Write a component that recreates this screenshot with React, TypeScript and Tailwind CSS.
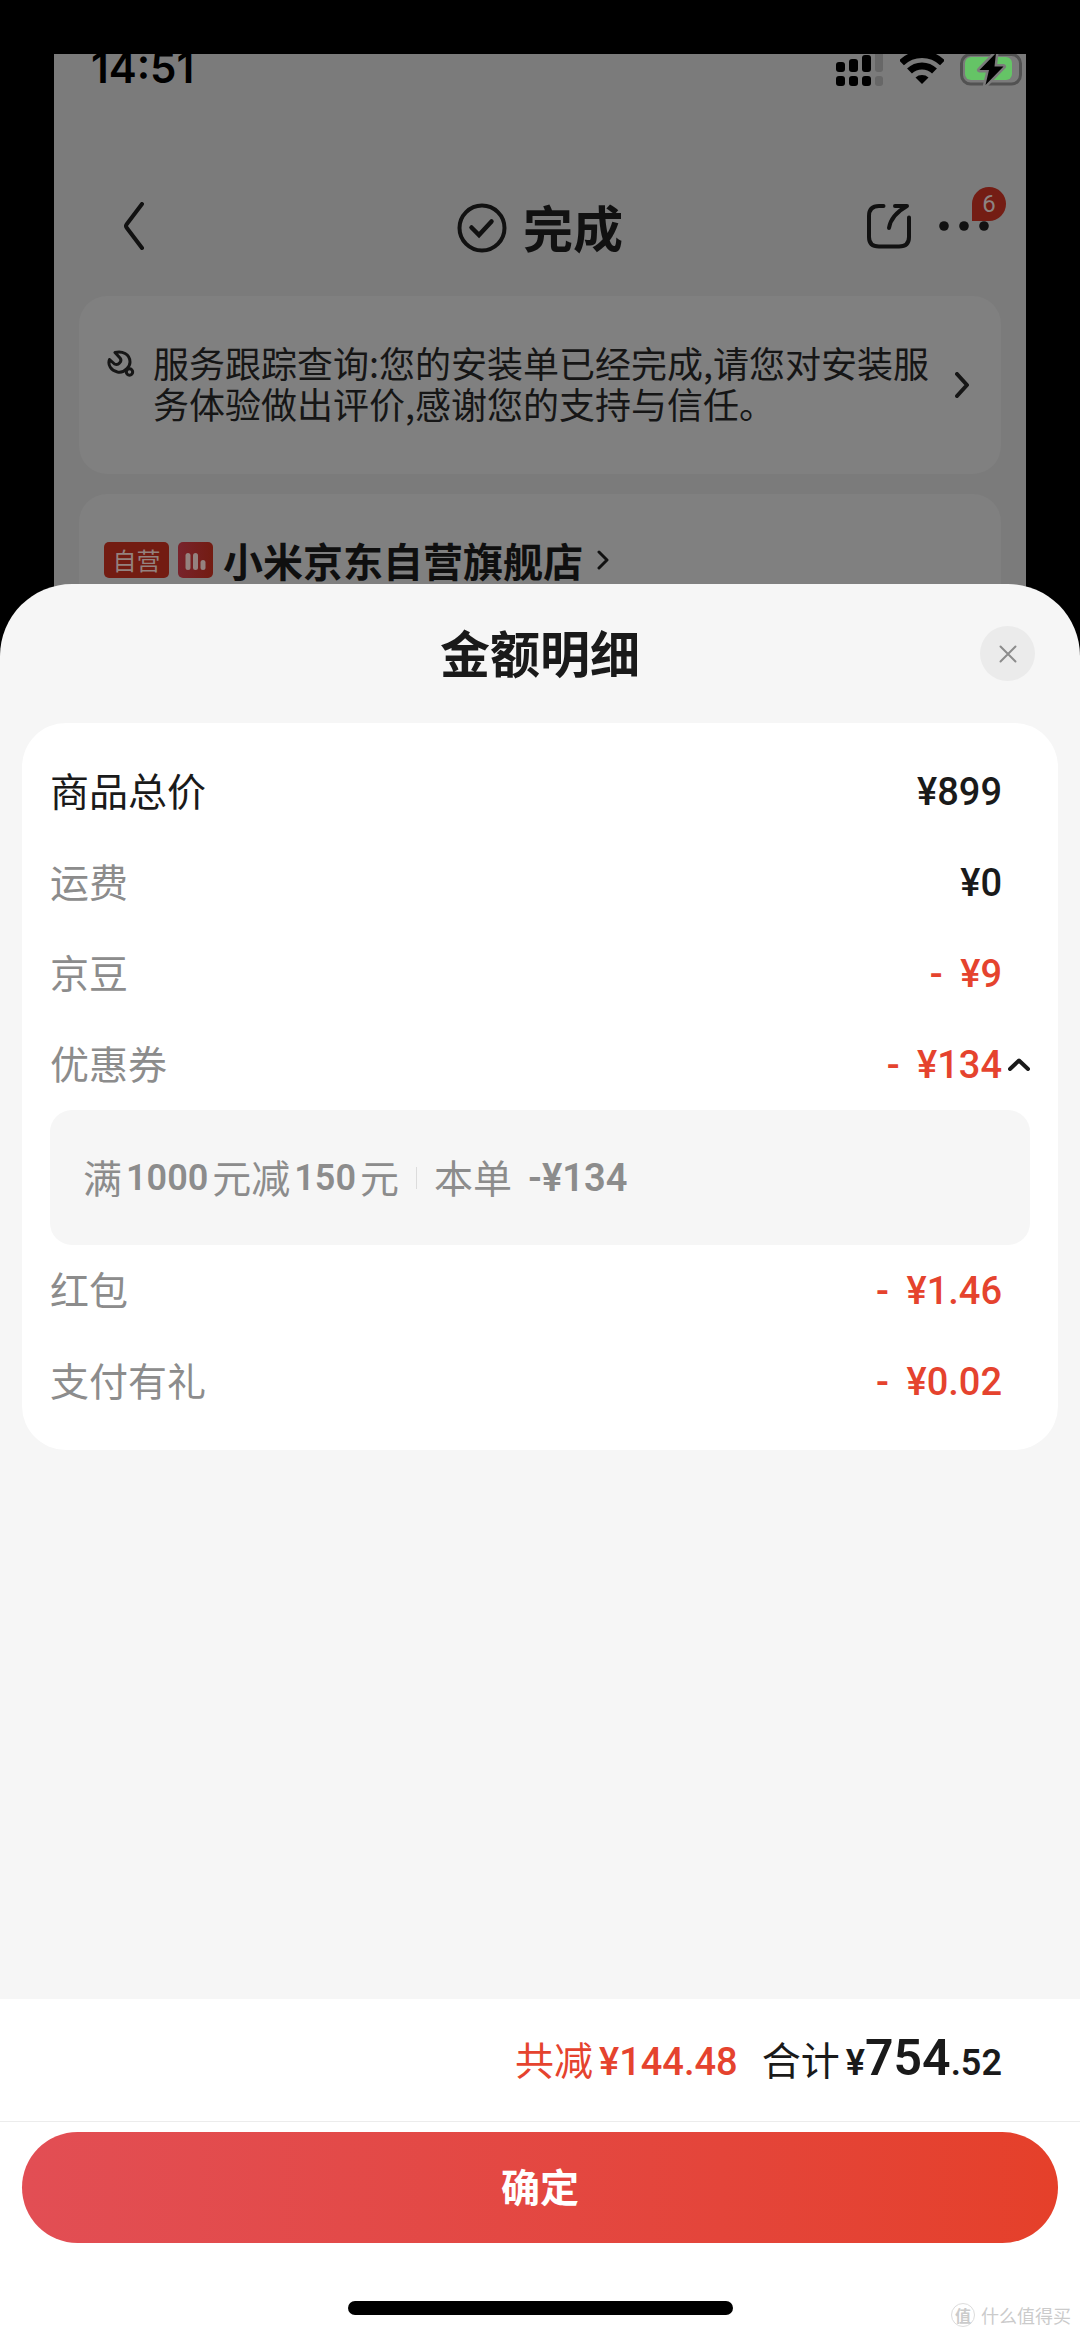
import { useState } from "react";

type Row = {
  label: string;
  amount: string;
  discount?: boolean;
  strong?: boolean;
  expandable?: boolean;
};

const rowsBefore: Row[] = [
  { label: "商品总价", amount: "¥899", strong: true },
  { label: "运费", amount: "¥0" },
  { label: "京豆", amount: "¥9", discount: true },
  { label: "优惠券", amount: "¥134", discount: true, expandable: true },
];

const rowsAfter: Row[] = [
  { label: "红包", amount: "¥1.46", discount: true },
  { label: "支付有礼", amount: "¥0.02", discount: true },
];

const StatusBar = () => (
  <div className="flex h-[32px] items-end justify-between pl-[37px] pr-1">
    <span className="font-['Inter',sans-serif] text-[42px] leading-[36px] font-semibold text-black">14:51</span>
    <div className="flex items-start gap-4">
      <svg width="48" height="32" viewBox="0 0 48 32" fill="#000">
        <rect x="0" y="8" width="9" height="10" rx="3" />
        <rect x="13" y="5" width="9" height="13" rx="3" />
        <rect x="26" y="1" width="9" height="17" rx="3" />
        <rect x="39" y="-6" width="8" height="24" rx="3" fill="#676767" />
        <rect x="0" y="22" width="9" height="10" rx="3" />
        <rect x="13" y="22" width="9" height="10" rx="3" />
        <rect x="26" y="22" width="9" height="10" rx="3" />
        <rect x="39" y="22" width="8" height="10" rx="3" fill="#676767" />
      </svg>
      <svg width="44" height="32" viewBox="0 0 44 32" fill="none" stroke="#000" strokeWidth="7">
        <path d="M1.5 8.8A29.5 29.5 0 0 1 42.5 8.8" />
        <path d="M9.5 17A18 18 0 0 1 34.5 17" />
        <path d="M22 30L15.5 23.5A10 10 0 0 1 28.5 23.5Z" fill="#000" stroke="none" />
      </svg>
      <svg width="62" height="32" viewBox="0 0 62 32">
        <rect x="1.5" y="0.5" width="59" height="29.5" rx="9" fill="none" stroke="#525252" strokeWidth="3" />
        <rect x="5" y="3" width="47" height="23" rx="6" fill="#65c466" />
        <path
          d="M36 -1L19.5 16H29L25.5 31L43.5 12.5H34.5Z"
          fill="#000"
          stroke="#7b7b7b"
          strokeWidth="5"
          strokeLinejoin="round"
          paintOrder="stroke"
        />
      </svg>
    </div>
  </div>
);

const OrderHeader = () => (
  <header className="mt-[74px] mb-[4px] grid h-[132px] grid-cols-[1fr_auto_1fr] items-center px-[37px] text-[#111]">
    <button aria-label="返回" className="ml-[33px] justify-self-start">
      <svg width="20" height="48" viewBox="0 0 20 48" fill="none" stroke="#111" strokeWidth="4" strokeLinecap="round" strokeLinejoin="round">
        <path d="M18 2L2.5 22.5Q1.5 24 2.5 25.5L18 46" />
      </svg>
    </button>
    <div className="flex items-center gap-4">
      <svg className="mt-1" width="50" height="50" viewBox="0 0 50 50" fill="none" stroke="#111" strokeWidth="4">
        <circle cx="25" cy="25" r="22.5" />
        <path d="M14.5 24.5L22 32L34.5 18.5" strokeWidth="4.5" strokeLinecap="round" />
      </svg>
      <h1 className="text-[50px] leading-[56px] font-bold">完成</h1>
    </div>
    <div className="flex items-center gap-[28px] justify-self-end">
      <button aria-label="分享">
        <svg width="44" height="46" viewBox="0 0 44 46" fill="none" stroke="#111" strokeWidth="4" strokeLinecap="round" strokeLinejoin="round">
          <path d="M16.5 3H12Q2 3 2 13V34Q2 43.5 12 43.5H32Q42 43.5 42 34V14.5" />
          <path d="M28 3H40Q24 12 22 25" />
        </svg>
      </button>
      <button aria-label="更多" className="relative">
        <svg width="50" height="10" viewBox="0 0 50 10" fill="#111">
          <circle cx="5" cy="5" r="4.8" />
          <circle cx="25" cy="5" r="4.8" />
          <circle cx="45" cy="5" r="4.8" />
        </svg>
        <span className="absolute -top-[34px] left-[33px] flex h-[34px] w-[34px] items-center justify-center rounded-full rounded-bl-[4px] bg-[#741d14] font-['Roboto',sans-serif] text-[24px] leading-none text-[#8c8482]">
          6
        </span>
      </button>
    </div>
  </header>
);

const ServiceCard = () => (
  <a href="#service" className="mx-[25px] flex items-center rounded-[28px] bg-[#808080] pt-[46px] pr-[32px] pb-[50px] pl-[28px] text-[#161616]">
    <svg className="mt-2 shrink-0 self-start" width="28" height="28" viewBox="0 0 28 28" fill="none" stroke="#161616" strokeWidth="3" strokeLinecap="round" strokeLinejoin="round">
      <path d="M8 2.5C15 0.5 23 4 23 12Q23 15.5 20 18.5Q16 23 10.5 22C4 20.5 0.5 15 2.5 9.5L7.5 14Q10.5 15.5 12.5 13Q15 10.5 13 8Z" />
      <circle cx="22.5" cy="22" r="3.2" />
    </svg>
    <p className="ml-[18px] flex-1 text-[36px] leading-[41px]">
      服务跟踪查询:您的安装单已经完成,请您对安装服务体验做出评价,感谢您的支持与信任。
    </p>
    <svg className="ml-5 mt-1 shrink-0" width="14" height="26" viewBox="0 0 14 26" fill="none" stroke="#161616" strokeWidth="4" strokeLinecap="round" strokeLinejoin="round">
      <path d="M2 2L12 13L2 24" />
    </svg>
  </a>
);

const ShopCard = () => (
  <div className="mx-[25px] mt-5 rounded-t-[28px] bg-[#808080] px-[25px] pt-[46px] pb-[76px]">
    <a href="#shop" className="flex items-center text-[#0f0f0f]">
      <span className="flex h-[36px] w-[65px] items-center justify-center rounded-[5px] bg-[#731c12] text-[24px] leading-none text-[#94827f]">
        自营
      </span>
      <svg className="ml-[9px]" width="35" height="36" viewBox="0 0 35 36">
        <defs>
          <linearGradient id="badge" x1="0" y1="0" x2="1" y2="0">
            <stop offset="0" stopColor="#78232c" />
            <stop offset="1" stopColor="#731c12" />
          </linearGradient>
        </defs>
        <rect width="35" height="36" rx="5" fill="url(#badge)" />
        <g fill="#94827f">
          <rect x="7.5" y="11" width="5" height="17" rx="2.5" />
          <rect x="15" y="11" width="5" height="17" rx="2.5" />
          <rect x="22.5" y="18" width="5" height="10" rx="2.5" />
        </g>
      </svg>
      <h2 className="ml-[10px] text-[40px] leading-[40px] font-bold">小米京东自营旗舰店</h2>
      <svg className="ml-[14px]" width="12" height="20" viewBox="0 0 12 20" fill="none" stroke="#111" strokeWidth="3" strokeLinecap="round" strokeLinejoin="round">
        <path d="M2 2L10 10L2 18" />
      </svg>
    </a>
  </div>
);

type AmountRowProps = { row: Row; open?: boolean; onToggle?: () => void };

const AmountRow = ({ row, open, onToggle }: AmountRowProps) => (
  <li className="flex h-[91px] items-center">
    <span className={`flex-1 pb-1.5 text-[39px] leading-[48px] ${row.strong ? "text-[#1a1a1a]" : "text-[#8c8c8c]"}`}>
      {row.label}
    </span>
    <span
      className={`font-['Roboto',sans-serif] text-[38px] leading-[48px] font-medium ${
        row.discount ? "text-[#e5432e]" : "text-[#1a1a1a]"
      }`}
    >
      {row.discount && <span className="mr-2">- </span>}
      {row.amount}
    </span>
    <span className="flex w-[28px] justify-end">
      {row.expandable && (
        <button aria-label="展开优惠券" aria-expanded={open} onClick={onToggle}>
          <svg width="22" height="13" viewBox="0 0 22 13" fill="none" stroke="#1a1a1a" strokeWidth="4" strokeLinecap="round" strokeLinejoin="round">
            <path d="M2 11L11 2.5L20 11" />
          </svg>
        </button>
      )}
    </span>
  </li>
);

const CouponDetail = () => (
  <li className="flex h-[135px] items-center rounded-[22px] bg-[#f6f6f6] px-[33px] text-[39px] leading-[48px] text-[#8c8c8c]">
    <span className="pb-1">满</span>
    <span className="mx-1 font-['Roboto',sans-serif] text-[36px] font-semibold">1000</span>
    <span className="pb-1">元减</span>
    <span className="mx-1 font-['Roboto',sans-serif] text-[36px] font-semibold">150</span>
    <span className="pb-1">元</span>
    <span className="mx-[17px] h-[22px] w-px bg-[#dcdcdc]" />
    <span className="pb-1">本单</span>
    <span className="ml-4 font-['Roboto',sans-serif] text-[38px] font-semibold">-¥134</span>
  </li>
);

export default function App() {
  const [couponOpen, setCouponOpen] = useState(true);

  return (
    <div className="flex min-h-screen flex-col bg-black font-['Noto_Sans_CJK_SC',sans-serif]">
      {/* Dimmed order page behind the sheet */}
      <div className="mx-[54px] mt-[54px] bg-[#7b7b7b]">
        <StatusBar />
        <OrderHeader />
        <ServiceCard />
        <ShopCard />
      </div>

      <section className="relative -mt-[72px] flex flex-1 flex-col rounded-t-[72px] bg-[#f6f6f6]">
        <div className="grid h-[139px] grid-cols-[1fr_auto_1fr] items-center px-[45px]">
          <h2 className="col-start-2 pb-1.5 text-[50px] leading-[56px] font-bold text-[#1a1a1a]">金额明细</h2>
          <button aria-label="关闭" className="flex h-[55px] w-[55px] items-center justify-center justify-self-end rounded-full bg-[#ebebeb]">
            <svg width="18" height="18" viewBox="0 0 18 18" stroke="#8c8c8c" strokeWidth="2" strokeLinecap="round">
              <path d="M1.5 1.5L16.5 16.5M16.5 1.5L1.5 16.5" />
            </svg>
          </button>
        </div>

        <ul className="mx-[22px] rounded-[44px] bg-white px-[28px] py-[23px]">
          {rowsBefore.map((row) => (
            <AmountRow key={row.label} row={row} open={couponOpen} onToggle={() => setCouponOpen(!couponOpen)} />
          ))}
          {couponOpen && <CouponDetail />}
          {rowsAfter.map((row) => (
            <AmountRow key={row.label} row={row} />
          ))}
        </ul>

        <footer className="mt-auto bg-white">
          <div className="flex h-[123px] items-center justify-end border-b border-[#ececec] pr-[78px]">
            <p className="flex items-baseline text-[39px] leading-[56px]">
              <span className="text-[#e5432e]">共减</span>
              <span className="ml-1.5 font-['Roboto',sans-serif] text-[38px] font-medium text-[#e5432e]">¥144.48</span>
              <span className="ml-6 text-[#1a1a1a]">合计</span>
              <span className="ml-1.5 font-['Roboto',sans-serif] text-[36px] font-semibold text-[#1a1a1a]">
                ¥<span className="text-[50px]">754</span>.52
              </span>
            </p>
          </div>
          <div className="px-[22px] pt-[10px]">
            <button className="h-[111px] w-full rounded-full bg-linear-to-r from-[#e24e54] to-[#e5402a] pb-1 text-[39px] font-bold text-white">
              确定
            </button>
          </div>
          <div className="relative flex h-[94px] items-end justify-center pb-[22px]">
            <div className="h-[14px] w-[385px] rounded-full bg-black" />
            <div className="absolute right-[9px] bottom-[10px] flex items-center gap-[6px] text-[#cbcbcb]">
              <span className="flex h-[24px] w-[24px] items-center justify-center rounded-full border border-[#dcdcdc] text-[16px] leading-none font-bold">
                值
              </span>
              <span className="text-[18px] leading-[24px]">什么值得买</span>
            </div>
          </div>
        </footer>
      </section>
    </div>
  );
}
